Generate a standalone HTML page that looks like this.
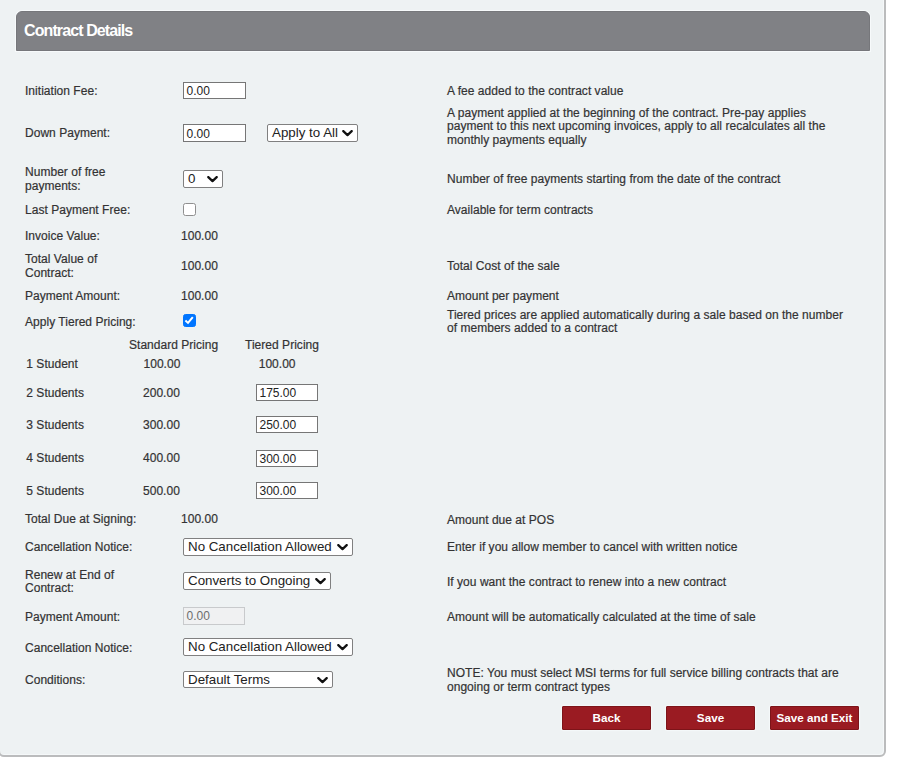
<!DOCTYPE html>
<html><head><meta charset="utf-8"><title>Contract Details</title>
<style>
html,body{margin:0;padding:0;background:#fff;width:900px;height:759px;overflow:hidden;}
body{position:relative;font-family:"Liberation Sans",sans-serif;font-size:12px;color:#333;}
.panel{position:absolute;left:-2px;top:-20px;width:888px;height:777px;box-sizing:border-box;background:#eef2f3;border:2px solid #bbbcbd;border-radius:6px;box-shadow:inset -1px -1px 0 #f5f8f9;}
.hdr{position:absolute;left:16px;top:11px;width:854px;height:40px;box-sizing:border-box;background:#808185;border-radius:6px 6px 0 0;border:1px solid #76777b;box-shadow:0 0 0 1px rgba(250,252,253,.75);}
.hdr span{position:absolute;left:7px;top:10px;font-weight:bold;font-size:16px;line-height:18px;color:#fff;letter-spacing:-0.9px;white-space:nowrap;}
.t{position:absolute;white-space:pre;line-height:14px;height:14px;letter-spacing:0.03px;-webkit-text-stroke:0.2px #333;}
.inp{position:absolute;box-sizing:border-box;background:#fff;border:1px solid #767676;font-size:12px;line-height:14px;color:#222;padding-left:2.5px;white-space:pre;}
.dis{background:#f0f1f2;border-color:#c8cacc;color:#6d6d6d;}
.sel{position:absolute;box-sizing:border-box;background:#fff;border:1px solid #808080;border-radius:2px;font-size:13.333px;color:#222;padding-left:4px;white-space:pre;overflow:hidden;}
.sel svg{position:absolute;top:5px;}
.cb{position:absolute;box-sizing:border-box;border:1px solid #8f8f8f;border-radius:2.5px;background:#fff;}
.cb.on{background:#0075ff;border-color:#0075ff;}
.btn{position:absolute;box-sizing:border-box;background:#9a1b22;border:1px solid #7d1419;border-radius:1px;color:#fff;font-weight:bold;font-size:11.7px;text-align:center;line-height:22px;box-shadow:0 0 1px 1px rgba(248,250,251,.8);}
</style></head><body>
<div class="panel"></div>
<div class="hdr"><span>Contract Details</span></div>

<div class="t" style="left:25px;top:84.0px;">Initiation Fee:</div>
<div class="t" style="left:25px;top:125.7px;">Down Payment:</div>
<div class="t" style="left:25px;top:165.0px;">Number of free</div>
<div class="t" style="left:25px;top:178.6px;">payments:</div>
<div class="t" style="left:25px;top:203.3px;">Last Payment Free:</div>
<div class="t" style="left:25px;top:228.5px;">Invoice Value:</div>
<div class="t" style="left:25px;top:252.0px;">Total Value of</div>
<div class="t" style="left:25px;top:265.6px;">Contract:</div>
<div class="t" style="left:25px;top:289.0px;">Payment Amount:</div>
<div class="t" style="left:25px;top:314.7px;">Apply Tiered Pricing:</div>
<div class="t" style="left:25px;top:512.0px;">Total Due at Signing:</div>
<div class="t" style="left:25px;top:540.3px;">Cancellation Notice:</div>
<div class="t" style="left:25px;top:568.2px;">Renew at End of</div>
<div class="t" style="left:25px;top:581.2px;">Contract:</div>
<div class="t" style="left:25px;top:609.7px;">Payment Amount:</div>
<div class="t" style="left:25px;top:640.6px;">Cancellation Notice:</div>
<div class="t" style="left:25px;top:673.0px;">Conditions:</div>
<div class="t" style="left:181px;top:228.7px;">100.00</div>
<div class="t" style="left:181px;top:258.8px;">100.00</div>
<div class="t" style="left:181px;top:289.2px;">100.00</div>
<div class="t" style="left:181px;top:512.0px;">100.00</div>
<div class="t" style="left:129px;top:337.6px;">Standard Pricing</div>
<div class="t" style="left:245px;top:337.5px;">Tiered Pricing</div>
<div class="t" style="left:26.3px;top:357.4px;">1 Student</div>
<div class="t" style="left:143.5px;top:357.4px;">100.00</div>
<div class="t" style="left:258.7px;top:357.4px;">100.00</div>
<div class="t" style="left:26.3px;top:386.4px;">2 Students</div>
<div class="t" style="left:143px;top:386.4px;">200.00</div>
<div class="t" style="left:26.3px;top:418.0px;">3 Students</div>
<div class="t" style="left:143px;top:418.0px;">300.00</div>
<div class="t" style="left:26.3px;top:450.6px;">4 Students</div>
<div class="t" style="left:143px;top:450.6px;">400.00</div>
<div class="t" style="left:26.3px;top:484.0px;">5 Students</div>
<div class="t" style="left:143px;top:484.0px;">500.00</div>
<div class="t" style="left:447px;top:83.7px;">A fee added to the contract value</div>
<div class="t" style="left:447px;top:106.4px;">A payment applied at the beginning of the contract. Pre-pay applies</div>
<div class="t" style="left:447px;top:119.3px;">payment to this next upcoming invoices, apply to all recalculates all the</div>
<div class="t" style="left:447px;top:133.0px;">monthly payments equally</div>
<div class="t" style="left:447px;top:172.0px;">Number of free payments starting from the date of the contract</div>
<div class="t" style="left:447px;top:202.6px;">Available for term contracts</div>
<div class="t" style="left:447px;top:259.0px;">Total Cost of the sale</div>
<div class="t" style="left:447px;top:289.0px;">Amount per payment</div>
<div class="t" style="left:447px;top:307.7px;">Tiered prices are applied automatically during a sale based on the number</div>
<div class="t" style="left:447px;top:320.6px;">of members added to a contract</div>
<div class="t" style="left:447px;top:512.5px;">Amount due at POS</div>
<div class="t" style="left:447px;top:540.2px;">Enter if you allow member to cancel with written notice</div>
<div class="t" style="left:447px;top:575.0px;">If you want the contract to renew into a new contract</div>
<div class="t" style="left:447px;top:609.6px;">Amount will be automatically calculated at the time of sale</div>
<div class="t" style="left:447px;top:666.1px;">NOTE: You must select MSI terms for full service billing contracts that are</div>
<div class="t" style="left:447px;top:679.5px;">ongoing or term contract types</div>
<div class="inp" style="left:183px;top:82px;width:63px;height:17px;line-height:17px">0.00</div>
<div class="inp" style="left:183px;top:124px;width:63px;height:18px;line-height:18px">0.00</div>
<div class="inp" style="left:256px;top:384px;width:62px;height:17px;line-height:17px">175.00</div>
<div class="inp" style="left:256px;top:416px;width:62px;height:17px;line-height:17px">250.00</div>
<div class="inp" style="left:256px;top:450px;width:62px;height:17px;line-height:17px">300.00</div>
<div class="inp" style="left:256px;top:482px;width:62px;height:17px;line-height:17px">300.00</div>
<div class="inp dis" style="left:183px;top:607px;width:62px;height:18px;line-height:16px">0.00</div>
<div class="sel" style="left:267px;top:124px;width:91px;height:18px;line-height:16px">Apply to All<svg style="left:74px;top:5.3px" width="11" height="7" viewBox="0 0 11 7"><path d="M1.3 1.1 L5.5 5.1 L9.7 1.1" fill="none" stroke="#111" stroke-width="2.3" stroke-linecap="round" stroke-linejoin="round"/></svg></div>
<div class="sel" style="left:183px;top:170px;width:40px;height:18px;line-height:16px">0<svg style="left:23px;top:5.3px" width="11" height="7" viewBox="0 0 11 7"><path d="M1.3 1.1 L5.5 5.1 L9.7 1.1" fill="none" stroke="#111" stroke-width="2.3" stroke-linecap="round" stroke-linejoin="round"/></svg></div>
<div class="sel" style="left:183px;top:538px;width:170px;height:18px;line-height:16px">No Cancellation Allowed<svg style="left:153px;top:5.3px" width="11" height="7" viewBox="0 0 11 7"><path d="M1.3 1.1 L5.5 5.1 L9.7 1.1" fill="none" stroke="#111" stroke-width="2.3" stroke-linecap="round" stroke-linejoin="round"/></svg></div>
<div class="sel" style="left:183px;top:572px;width:148px;height:18px;line-height:16px">Converts to Ongoing<svg style="left:131px;top:5.3px" width="11" height="7" viewBox="0 0 11 7"><path d="M1.3 1.1 L5.5 5.1 L9.7 1.1" fill="none" stroke="#111" stroke-width="2.3" stroke-linecap="round" stroke-linejoin="round"/></svg></div>
<div class="sel" style="left:183px;top:638px;width:170px;height:18px;line-height:16px">No Cancellation Allowed<svg style="left:153px;top:5.3px" width="11" height="7" viewBox="0 0 11 7"><path d="M1.3 1.1 L5.5 5.1 L9.7 1.1" fill="none" stroke="#111" stroke-width="2.3" stroke-linecap="round" stroke-linejoin="round"/></svg></div>
<div class="sel" style="left:183px;top:671px;width:150px;height:17px;line-height:15px">Default Terms<svg style="left:133px;top:4.8px" width="11" height="7" viewBox="0 0 11 7"><path d="M1.3 1.1 L5.5 5.1 L9.7 1.1" fill="none" stroke="#111" stroke-width="2.3" stroke-linecap="round" stroke-linejoin="round"/></svg></div>
<div class="cb" style="left:183px;top:203px;width:13px;height:13px"></div>
<div class="cb on" style="left:183px;top:314px;width:13px;height:13px"><svg width="13" height="13" viewBox="0 0 13 13" style="position:absolute;left:-1px;top:-1px"><path d="M2.4 6.6 L5 8.9 L9.8 3.1" fill="none" stroke="#fff" stroke-width="2"/></svg></div>
<div class="btn" style="left:562px;top:706px;width:89px;height:24px">Back</div>
<div class="btn" style="left:666px;top:706px;width:89px;height:24px">Save</div>
<div class="btn" style="left:770px;top:706px;width:89px;height:24px">Save and Exit</div>
</body></html>
